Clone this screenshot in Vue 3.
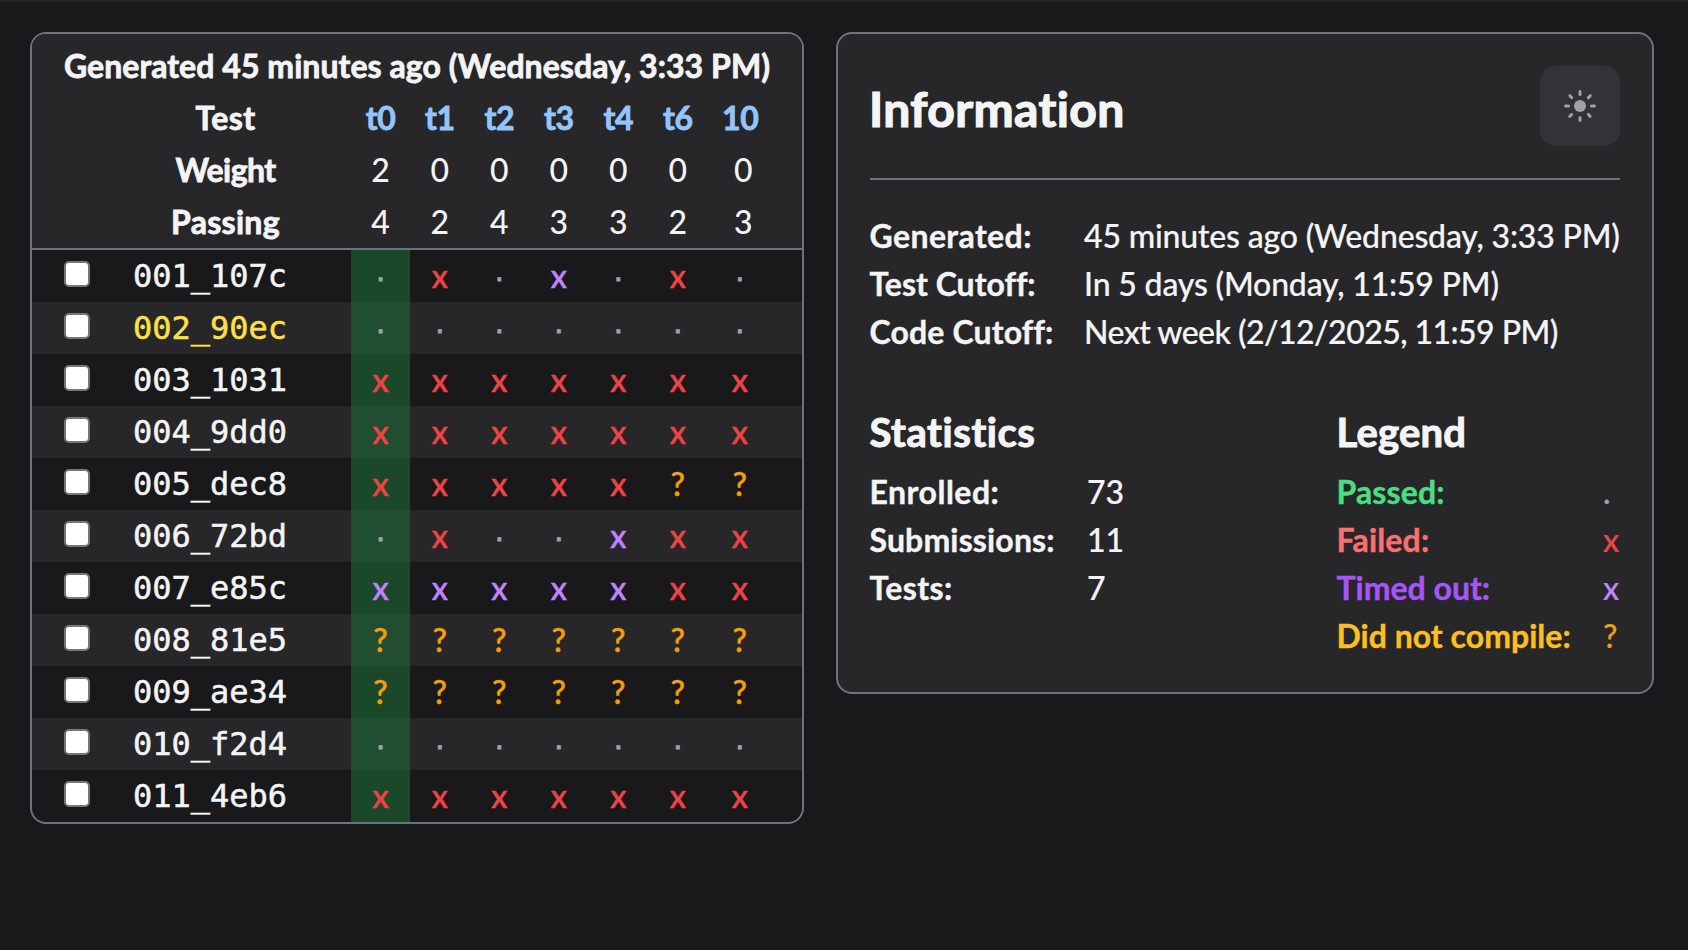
<script setup>
const tests = [
  { name: 't0', weight: 2, passing: 4 },
  { name: 't1', weight: 0, passing: 2 },
  { name: 't2', weight: 0, passing: 4 },
  { name: 't3', weight: 0, passing: 3 },
  { name: 't4', weight: 0, passing: 3 },
  { name: 't6', weight: 0, passing: 2 },
  { name: '10', weight: 0, passing: 3 },
]

// p = passed, f = failed, t = timed out, c = did not compile
const rows = [
  { id: '001_107c', results: 'pfptpfp' },
  { id: '002_90ec', results: 'ppppppp', mine: true },
  { id: '003_1031', results: 'fffffff' },
  { id: '004_9dd0', results: 'fffffff' },
  { id: '005_dec8', results: 'fffffcc' },
  { id: '006_72bd', results: 'pfpptff' },
  { id: '007_e85c', results: 'tttttff' },
  { id: '008_81e5', results: 'ccccccc' },
  { id: '009_ae34', results: 'ccccccc' },
  { id: '010_f2d4', results: 'ppppppp' },
  { id: '011_4eb6', results: 'fffffff' },
]

const symbols = { p: '·', f: 'x', t: 'x', c: '?' }
</script>

<template>
  <main class="page">
    <section class="card results">
      <header class="head">
        <div class="title">Generated 45 minutes ago (Wednesday, 3:33 PM)</div>
        <div class="line">
          <div class="label test">Test</div>
          <div v-for="t in tests" :key="t.name" class="cell name">{{ t.name }}</div>
        </div>
        <div class="line">
          <div class="label weight">Weight</div>
          <div v-for="t in tests" :key="t.name" class="cell count">{{ t.weight }}</div>
        </div>
        <div class="line">
          <div class="label passing">Passing</div>
          <div v-for="t in tests" :key="t.name" class="cell count">{{ t.passing }}</div>
        </div>
      </header>
      <div v-for="row in rows" :key="row.id" class="line row">
        <div class="who">
          <span class="check"></span>
          <span class="id" :class="{ mine: row.mine }">{{ row.id }}</span>
        </div>
        <div v-for="(r, i) in row.results" :key="i" class="cell result" :class="r">
          <span>{{ symbols[r] }}</span>
        </div>
      </div>
    </section>

    <section class="card info">
      <div class="top">
        <h1>Information</h1>
        <button class="theme" aria-label="Toggle theme">
          <svg width="32" height="32" viewBox="0 0 32 32" fill="none" stroke="#a1a1aa" stroke-width="3" stroke-linecap="round">
            <circle cx="16" cy="16" r="6" fill="#a1a1aa" stroke="none" />
            <path d="M16 1.5v3M16 27.5v3M1.5 16h3M27.5 16h3M5.9 5.7l1.7 1.9M26.3 5.7l-1.9 1.9M5.7 26.3l1.9-1.7M26.1 26.3l-1.7-1.9" />
          </svg>
        </button>
      </div>
      <dl class="times">
        <dt class="k1">Generated:</dt><dd>45 minutes ago (Wednesday, 3:33 PM)</dd>
        <dt class="k0">Test Cutoff:</dt><dd>In 5 days (Monday, 11:59 PM)</dd>
        <dt class="k2">Code Cutoff:</dt><dd class="narrow">Next week (2/12/2025, 11:59 PM)</dd>
      </dl>
      <div class="bottom">
        <div>
          <h2 class="statistics">Statistics</h2>
          <dl class="stats">
            <dt class="k3">Enrolled:</dt><dd>73</dd>
            <dt class="k2">Submissions:</dt><dd>11</dd>
            <dt class="k1">Tests:</dt><dd>7</dd>
          </dl>
        </div>
        <div class="legend">
          <h2>Legend</h2>
          <dl>
            <dt class="passed k2">Passed:</dt><dd class="p">.</dd>
            <dt class="failed k2">Failed:</dt><dd class="f">x</dd>
            <dt class="timed">Timed out:</dt><dd class="t">x</dd>
            <dt class="broken">Did not compile:</dt><dd class="c">?</dd>
          </dl>
        </div>
      </div>
    </section>
  </main>
</template>

<style>
body {
  background: #19191b;
}
</style>

<style scoped>
.page {
  box-sizing: border-box;
  height: 950px;
  border-top: 2px solid #252527;
  padding: 30px 34px 0 30px;
  display: flex;
  align-items: flex-start;
  justify-content: space-between;
  background: #19191b;
  color: #f4f4f5;
  font: 500 32px/48px Lato, "Open Sans", sans-serif;
  font-variant-ligatures: none;
  white-space: nowrap;
}
.card {
  box-sizing: border-box;
  border: 2px solid #6b7280;
  border-radius: 16px;
  overflow: hidden;
}
.results {
  width: 774px;
}
.head {
  background: #272729;
  border-bottom: 2px solid #6b7280;
  box-sizing: border-box;
  height: 216px;
}
.title {
  height: 52px;
  line-height: 64px;
  font-weight: 700;
  text-align: center;
  letter-spacing: 0.05px;
}
.title,
.label,
.name {
  -webkit-text-stroke: 0.8px currentColor;
}
.line {
  display: grid;
  grid-template-columns: 319px 59px repeat(5, 59.5px) 1fr;
  grid-template-rows: 52px;
  height: 52px;
  line-height: 64px;
}
.label {
  font-weight: 700;
  text-align: center;
  padding-left: 68px;
}
.test { letter-spacing: 0.4px; }
.weight { letter-spacing: -0.6px; }
.passing { letter-spacing: 0.3px; }
.cell {
  text-align: center;
}
.name {
  color: #93c5fd;
  font-weight: 700;
  letter-spacing: -0.4px;
}
.name:last-child { padding-right: 29px; }
.count:last-child { padding-right: 23px; }
.row {
  line-height: 52px;
}
.row:nth-child(odd) {
  background: #272729;
}
.who {
  display: flex;
  align-items: flex-start;
}
.check {
  box-sizing: border-box;
  width: 26px;
  height: 26px;
  margin: 11px 43px 0 32px;
  border: 2px solid #767676;
  border-radius: 5px;
  background: #fff;
}
.id {
  font-family: "DejaVu Sans Mono", monospace;
  font-weight: 400;
  -webkit-text-stroke: 0.5px currentColor;
}
.mine { color: #fde047; }
.result:nth-child(2) {
  background: rgba(29, 115, 56, 0.52);
}
.result {
  line-height: 51px;
  -webkit-text-stroke: 0.5px currentColor;
}
.result:last-child { padding-right: 30px; }
.p {
  color: #9ca3af;
}
.result.p {
  font-family: "Liberation Sans", sans-serif;
  line-height: 54px;
  -webkit-text-stroke: 0.9px currentColor;
}
.f { color: #ef4444; }
.t { color: #c084fc; }
.c { color: #f59e0b; }

.info {
  width: 818px;
  height: 662px;
  padding: 32px;
  background: #272729;
}
.top {
  display: flex;
  justify-content: space-between;
  align-items: center;
  height: 80px;
  padding-bottom: 32px;
  border-bottom: 2px solid #71717a;
}
h1 {
  margin: 6px 0 0 -1px;
  font-size: 48px;
  line-height: 64px;
  font-weight: 700;
  letter-spacing: 0.38px;
  -webkit-text-stroke: 1.2px currentColor;
}
.theme {
  display: grid;
  place-items: center;
  width: 80px;
  height: 80px;
  padding: 0;
  border: 0;
  border-radius: 16px;
  background: #333238;
}
dl {
  margin: 0;
  display: grid;
}
dt {
  margin-left: -0.5px;
  font-weight: 700;
  -webkit-text-stroke: 0.4px currentColor;
}
dd {
  margin: 0;
  letter-spacing: -0.18px;
  -webkit-text-stroke: 0.2px currentColor;
}
.times {
  margin-top: 32px;
  grid-template-columns: 214px 1fr;
}
.narrow { letter-spacing: -0.54px; }
.k0 { letter-spacing: 0; }
.k1 { letter-spacing: 0.4px; }
.k2 { letter-spacing: 0.15px; }
.k3 { letter-spacing: 0.5px; }
.bottom {
  display: flex;
  justify-content: space-between;
  margin-top: 48px;
}
h2 {
  margin: 0 0 8px -0.5px;
  font-size: 40px;
  line-height: 56px;
  font-weight: 700;
  letter-spacing: 0.2px;
  -webkit-text-stroke: 1px currentColor;
}
.statistics { letter-spacing: 0.55px; }
.stats {
  grid-template-columns: 217px auto;
}
.legend {
  width: 283px;
}
.legend dl {
  grid-template-columns: 266px 17px;
}
.passed { color: #4ade80; }
.failed { color: #f87171; }
.timed { color: #a855f7; }
.broken { color: #fbbf24; letter-spacing: 0.02px; }
</style>
